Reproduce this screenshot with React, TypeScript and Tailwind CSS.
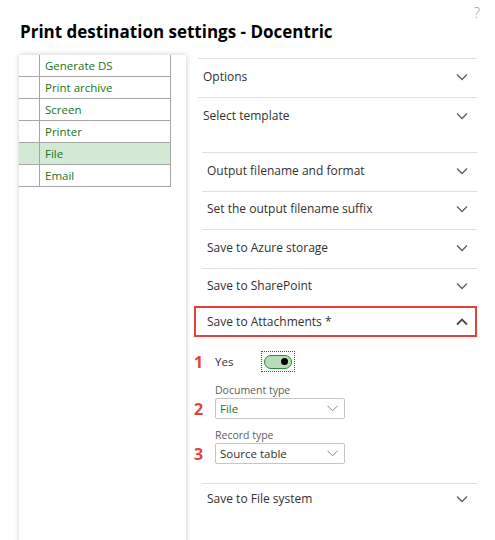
import React from "react";

const Chevron = ({ up }: { up?: boolean }) => (
  <svg width="12" height="8" viewBox="0 0 12 8" className={up ? "rotate-180" : ""}>
    <path d="M1 1.5l5 5 5-5" fill="none" stroke={up ? "#4a4a4a" : "#605e5c"} strokeWidth={up ? 1.8 : 1.3} />
  </svg>
);

const SmallChevron = () => (
  <svg width="11" height="7" viewBox="0 0 11 7">
    <path d="M0.5 0.8l5 5 5-5" fill="none" stroke="#8a8886" strokeWidth="1" />
  </svg>
);

const Header = ({ label, h = "h-[39px]" }: { label: string; h?: string }) => (
  <div className={`flex items-center justify-between border-t border-[#e1dfdd] pl-[5px] pr-[9px] pb-[3px] ${h}`}>
    <span className="text-[12px]">{label}</span>
    <Chevron />
  </div>
);

const rows = ["Generate DS", "Print archive", "Screen", "Printer", "File", "Email"];

export default function App() {
  return (
    <div className="w-[495px] h-[540px] bg-white overflow-hidden font-['Segoe_UI','Open_Sans',sans-serif] text-[#323130]">
      <div className="flex justify-end pr-[15px] h-[20px] pt-[5px] text-[15px] leading-[14px] text-[#a19f9d] font-light">?</div>
      <h1 className="pl-[20px] h-[24px] text-[17px] leading-[24px] font-bold text-black">
        Print destination settings - Docentric
      </h1>
      <div className="flex mt-[11px]">
        <div className="ml-[19px] w-[167px] h-[500px] bg-white shadow-[0_0_5px_rgba(0,0,0,0.22)]">
          <div className="w-[152px] flex flex-col">
            {rows.map((r) => (
              <div
                key={r}
                className={`flex h-[22px] border-b border-r border-[#a6a6a6] ${r === "File" ? "bg-[#d3e8d5]" : ""}`}
              >
                <div className="w-[21px] border-r border-[#a6a6a6]" />
                <div className="pl-[5px] flex items-center text-[11.5px] text-[#1b741b]">{r}</div>
              </div>
            ))}
          </div>
        </div>

        <div className="ml-[12px] w-[279px] flex flex-col pt-[3px]">
          <Header label="Options" />
          <div className="border-t border-[#e1dfdd] h-[55px]">
            <div className="flex items-center justify-between pl-[5px] pr-[9px] h-[35px]">
              <span className="text-[12px]">Select template</span>
              <Chevron />
            </div>
          </div>
          <div className="ml-[4px] flex flex-col">
            <Header label="Output filename and format" />
            <Header label="Set the output filename suffix" h="h-[38px]" />
            <Header label="Save to Azure storage" />
            <Header label="Save to SharePoint" h="h-[38px]" />
            <div className="relative flex items-center justify-between border-t border-[#e1dfdd] pl-[5px] pr-[9px] h-[31px]">
              <span className="text-[12px]">Save to Attachments *</span>
              <Chevron up />
              <div className="absolute left-[-8px] right-0 top-[-1px] bottom-0 border-2 border-[#e5413d]" />
            </div>
            <div className="-ml-[8px] flex flex-col pt-[14px] pb-[19px]">
              <div className="flex items-center h-[21px]">
                <span className="w-[21px] text-[16px] font-bold text-[#e5413d] leading-none">1</span>
                <span className="text-[11.5px] w-[46px]">Yes</span>
                <div className="w-[34px] h-[21px] border border-dotted border-[#107c10] flex items-center justify-center">
                  <div className="w-[28px] h-[14px] rounded-full bg-[#b7dcb9] border border-[#2f8a33] flex items-center justify-end pr-[3px]">
                    <div className="w-[7px] h-[7px] rounded-full bg-black" />
                  </div>
                </div>
              </div>
              <div className="flex flex-col mt-[10px]">
                <span className="pl-[21px] text-[10.5px] leading-[16px] text-[#605e5c]">Document type</span>
                <div className="flex items-center">
                  <span className="w-[21px] text-[16px] font-bold text-[#e5413d] leading-none">2</span>
                  <div className="w-[130px] h-[21px] border border-[#c8c6c4] rounded-[2px] flex items-center justify-between pl-[4px] pr-[6px]">
                    <span className="text-[11.5px] text-[#1b741b]">File</span>
                    <SmallChevron />
                  </div>
                </div>
              </div>
              <div className="flex flex-col mt-[8px]">
                <span className="pl-[21px] text-[10.5px] leading-[16px] text-[#605e5c]">Record type</span>
                <div className="flex items-center">
                  <span className="w-[21px] text-[16px] font-bold text-[#e5413d] leading-none">3</span>
                  <div className="w-[130px] h-[21px] border border-[#c8c6c4] rounded-[2px] flex items-center justify-between pl-[4px] pr-[6px]">
                    <span className="text-[11.5px] text-[#323130]">Source table</span>
                    <SmallChevron />
                  </div>
                </div>
              </div>
            </div>
            <Header label="Save to File system" h="h-[34px]" />
          </div>
        </div>
      </div>
    </div>
  );
}
